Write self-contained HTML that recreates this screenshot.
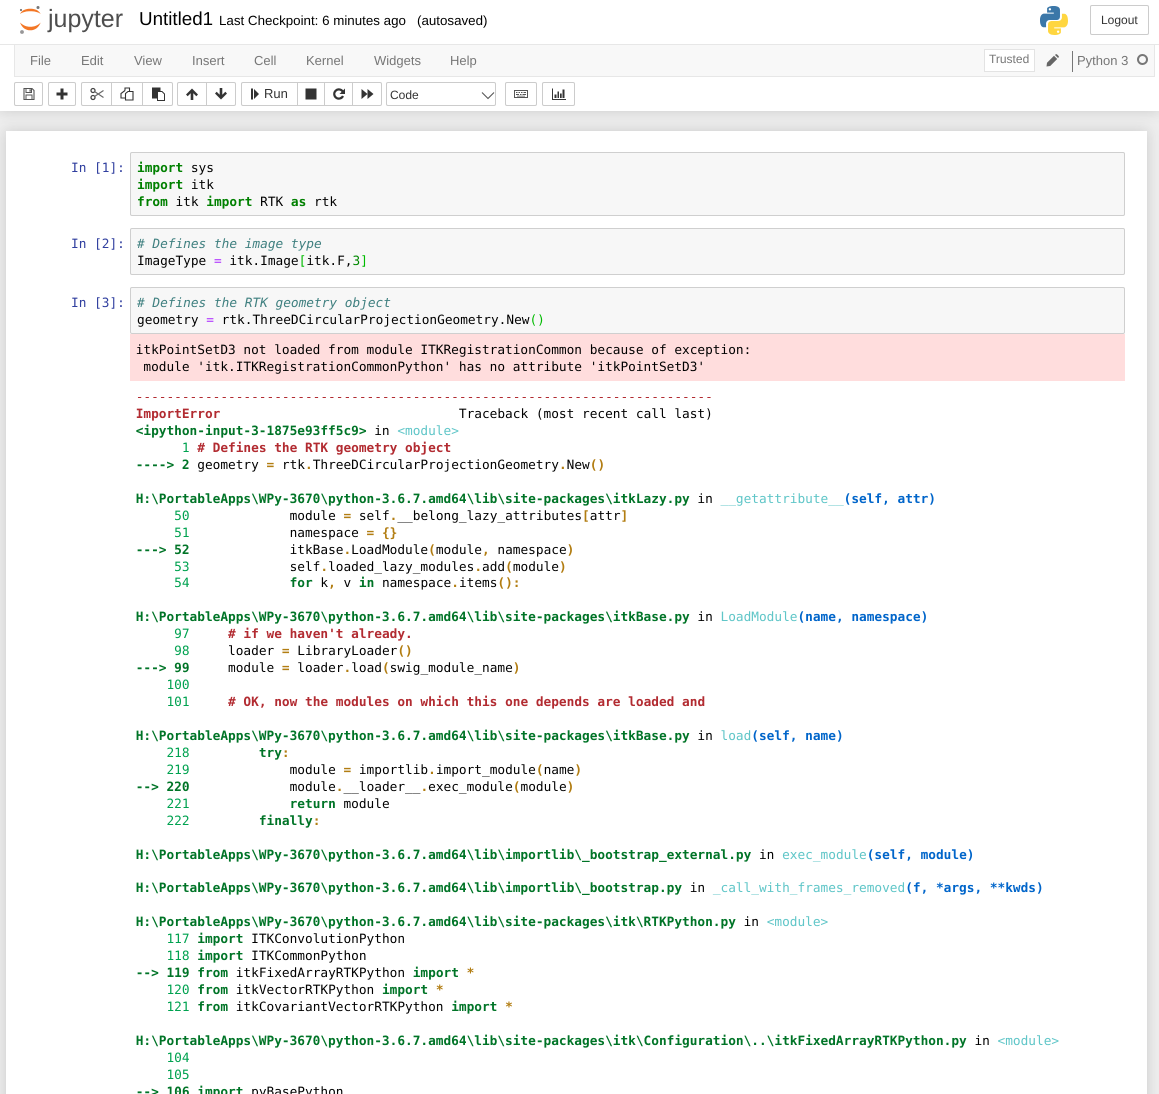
<!DOCTYPE html>
<html><head><meta charset="utf-8"><title>Untitled1</title>
<style>
html,body{margin:0;padding:0;width:1159px;height:1094px;overflow:hidden;background:#eee}
body{position:relative;font-family:"Liberation Sans",Arial,sans-serif;color:#333;text-rendering:geometricPrecision}
.a{position:absolute}
#hdr{left:0;top:0;width:1159px;height:111px;background:#fff;box-shadow:0 0 12px 1px rgba(87,87,87,.2)}
#nb{left:6px;top:131px;width:1141px;height:980px;background:#fff;box-shadow:0 0 12px 1px rgba(87,87,87,.2)}
.t{position:absolute;white-space:pre;line-height:17px}
.m{font-size:13px;color:#777;top:52px}
.b{position:absolute;top:82px;height:24px;box-sizing:border-box;background:#fff;border:1px solid #ccc;border-radius:2px}
.b svg{position:absolute;left:50%;top:50%;margin:-7px 0 0 -7px;width:14px;height:14px;fill:#333}
pre,.p{font-family:"DejaVu Sans Mono","Liberation Mono",monospace;font-size:12.79px;line-height:17px;margin:0;position:absolute;white-space:pre;color:#000}
.p{color:#303f9f;left:71px}
.box{position:absolute;left:130px;width:995px;box-sizing:border-box;background:#f7f7f7;border:1px solid #cfcfcf;border-radius:2px}
.k{color:#008000;font-weight:bold}.c{color:#408080;font-style:italic}.o{color:#a2f}.mb{color:#0b0}.n{color:#080}
.g{color:#007427;font-weight:bold}.G{color:#00a250}.r{color:#b22b31}.R{color:#b22b31;font-weight:bold}
.y{color:#b27d12;font-weight:bold}.C{color:#60c6c8}.B{color:#0065ca;font-weight:bold}
</style></head><body>
<div id="hdr" class="a"></div>
<div id="nb" class="a"></div>

<svg class="a" style="left:18px;top:5px" width="25" height="30" viewBox="0 0 25 30">
<path d="M2 9C4 5 8 3.800 12.300 3.800S20.500 5 22.700 9C20 6.800 16 6.200 12.300 6.200S5 6.800 2 9z" fill="#f37726"/>
<path d="M2 17.500C4 23 8 25.300 12.300 25.300S20.500 23 22.700 17.500C20 20.500 16 21.800 12.300 21.800S5 20.500 2 17.500z" fill="#f37726"/>
<circle cx="20" cy="2.500" r="1.500" fill="#767677"/><circle cx="3" cy="5" r="1.100" fill="#767677"/><circle cx="4" cy="27" r="1.900" fill="#989798"/>
</svg>
<div class="t" style="left:48px;top:9px;font-size:25px;line-height:20px;color:#4e4e4e">jupyter</div>
<div class="t" style="left:139px;top:10px;font-size:18.8px;color:#000;line-height:18px">Untitled1</div>
<div class="t" style="left:219px;top:12px;font-size:13.35px;color:#000">Last Checkpoint: 6 minutes ago</div>
<div class="t" style="left:417px;top:12px;font-size:13.35px;color:#000">(autosaved)</div>

<svg class="a" style="left:1040px;top:5.500px" width="28" height="29" viewBox="0 0 30 31">
<path d="M14.600 0C7.200 0 7.600 3.200 7.600 3.200V7h7.200v1.100H4.700S0 7.600 0 15.300s4.100 7.400 4.100 7.400h2.400v-3.600s-.1-4.100 4-4.100h7s3.900.1 3.900-3.700V4.300S22 0 14.600 0zM10.600 2.200a1.300 1.300 0 1 1 0 2.600 1.300 1.300 0 0 1 0-2.600z" fill="#3b77a8"/>
<path d="M15.400 31c7.400 0 7-3.200 7-3.200V24h-7.200v-1.100h10.100s4.700.5 4.700-7.200-4.100-7.400-4.100-7.400h-2.400v3.600s.1 4.100-4 4.100h-7s-3.900-.1-3.900 3.700v6.500S8 31 15.400 31zm4-2.200a1.300 1.300 0 1 1 0-2.600 1.300 1.300 0 0 1 0 2.600z" fill="#ffd640"/>
</svg>
<div class="a" style="left:1090px;top:5px;width:59px;height:30px;box-sizing:border-box;border:1px solid #ccc;border-radius:2px;background:#fff"></div>
<div class="t" style="left:1101px;top:12px;font-size:12px;color:#333">Logout</div>

<div class="a" style="left:0;top:44px;width:1159px;height:1px;background:#e7e7e7"></div>
<div class="a" style="left:14px;top:44px;width:1141px;height:33px;box-sizing:border-box;background:#f8f8f8;border:1px solid #e7e7e7;border-top-color:#e7e7e7"></div>
<div class="t m" style="left:30px">File</div>
<div class="t m" style="left:81px">Edit</div>
<div class="t m" style="left:134px">View</div>
<div class="t m" style="left:192px">Insert</div>
<div class="t m" style="left:254px">Cell</div>
<div class="t m" style="left:306px">Kernel</div>
<div class="t m" style="left:374px">Widgets</div>
<div class="t m" style="left:450px">Help</div>

<div class="a" style="left:984px;top:49px;width:51px;height:23px;box-sizing:border-box;border:1px solid #e3e3e3;background:#fff"></div>
<div class="t" style="left:989px;top:51px;font-size:12px;color:#777">Trusted</div>
<svg class="a" style="left:1046px;top:54px" width="13" height="13" viewBox="0 0 13 13"><path d="M0.500 12.500l.5-3.700 7-7 3.200 3.200-7 7zM9 1l.6-.6c.4-.4 1-.4 1.400 0l1.600 1.600c.4.4.4 1 0 1.400l-.6.6z" fill="#666"/></svg>
<div class="a" style="left:1072px;top:51px;width:1px;height:21px;background:#777"></div>
<div class="t m" style="left:1077px">Python 3</div>
<div class="a" style="left:1137px;top:54px;width:11px;height:11px;box-sizing:border-box;border:2px solid #777;border-radius:50%"></div>

<div class="b" style="left:14px;width:29px"><svg viewBox="0 0 14 14"><path d="M2 1.500h8l2 2V12.500H2z" fill="none" stroke="#555" stroke-width="1.100"/><path d="M4 1.500h5.500v4H4zM4 8h6v4.500H4z" fill="none" stroke="#555" stroke-width="1"/><path d="M7.500 2.300h1.300v2.400H7.500z" fill="#555"/></svg></div>
<div class="b" style="left:48px;width:28px"><svg viewBox="0 0 14 14"><path d="M5.500 1.500h3v4h4v3h-4v4h-3v-4h-4v-3h4z"/></svg></div>
<div class="b" style="left:81px;width:31px;border-radius:2px 0 0 2px"><svg viewBox="0 0 14 14"><circle cx="3" cy="3.500" r="2" fill="none" stroke="#444" stroke-width="1.300"/><circle cx="3" cy="10.500" r="2" fill="none" stroke="#444" stroke-width="1.300"/><path d="M4.500 4.500L13.500 10.500M4.500 9.500L13.500 3.500" stroke="#666" stroke-width="1.100" fill="none"/></svg></div>
<div class="b" style="left:111px;width:32px;border-radius:0"><svg viewBox="0 0 14 14"><path d="M5 3.500V1h4.500v3.500" fill="none" stroke="#333" stroke-width="1.100"/><path d="M5 3.500L1 6.500v4.500h4.500" fill="none" stroke="#333" stroke-width="1.100"/><path d="M5.500 6.500L8 4.500h5V13H5.500z" fill="#fff" stroke="#333" stroke-width="1.100"/></svg></div>
<div class="b" style="left:142px;width:31px;border-radius:0 2px 2px 0"><svg viewBox="0 0 14 14"><path d="M1 0.500h8.500v3.500H6v7.500H1z"/><path d="M6.500 4.500h4.500l2.500 2.500v6.500h-7z" fill="#fff" stroke="#333" stroke-width="1"/></svg></div>
<div class="b" style="left:177px;width:30px;border-radius:2px 0 0 2px"><svg viewBox="0 0 14 14"><path d="M7 1.500l6 6-1.700 1.700L8.300 6.200V13H5.700V6.200L2.700 9.200 1 7.500z"/></svg></div>
<div class="b" style="left:206px;width:30px;border-radius:0 2px 2px 0"><svg viewBox="0 0 14 14"><path d="M7 12.500l-6-6 1.700-1.700 3 3V1h2.600v6.800l3-3L13 6.500z"/></svg></div>
<div class="b" style="left:241px;width:57px;border-radius:2px 0 0 2px"><svg style="left:8px;margin-left:0;width:10px" viewBox="0 0 10 14"><path d="M1 1.500h2v11H1zM4 2l5 5-5 5z"/></svg></div>
<div class="t" style="left:264px;top:85px;font-size:13px;color:#333">Run</div>
<div class="b" style="left:297px;width:28px;border-radius:0"><svg viewBox="0 0 14 14"><path d="M1.500 1.500h11v11h-11z"/></svg></div>
<div class="b" style="left:324px;width:29px;border-radius:0"><svg viewBox="0 0 14 14"><path d="M11 9a4.600 4.600 0 1 1-.3-4.500" fill="none" stroke="#333" stroke-width="2.200"/><path d="M13 1.500V7H7.500z"/></svg></div>
<div class="b" style="left:352px;width:30px;border-radius:0 2px 2px 0"><svg viewBox="0 0 14 14"><path d="M1.500 2l6 5-6 5zM7.500 2l6 5-6 5z"/></svg></div>
<div class="b" style="left:386px;width:110px"></div>
<div class="t" style="left:390px;top:87px;font-size:12px;color:#333">Code</div>
<svg class="a" style="left:481px;top:91px" width="14" height="9" viewBox="0 0 14 9"><path d="M1 1.500L7 7.500 13 1.500" fill="none" stroke="#555" stroke-width="1.100"/></svg>
<div class="b" style="left:505px;width:32px"><svg viewBox="0 0 14 14"><path d="M0 3h14v8H0zm1 1v6h12V4zm1 1h1.500v1H2zm2.500 0H6v1H4.500zM7 5h1.500v1H7zm2.500 0H12v1H9.500zM2 7h3v1H2zm4 0h1.500v1H6zm2.500 0H12v1H8.500zM3 8.800h8v.7H3z" fill-rule="evenodd" fill="#555"/></svg></div>
<div class="b" style="left:542px;width:33px"><svg viewBox="0 0 14 14"><path d="M0 1.500h1V12h13v1H0zM2.500 7.500h2V11h-2zM5.500 4.500h1.500V11H5.500zM8 6.500h1.700V11H8zM10.500 2.500h2V11h-2z"/></svg></div>

<div class="p" style="top:160px">In [1]:</div>
<div class="box" style="top:152px;height:64px"></div>
<pre style="left:137px;top:160px"><span class="k">import</span> sys
<span class="k">import</span> itk
<span class="k">from</span> itk <span class="k">import</span> RTK <span class="k">as</span> rtk</pre>

<div class="p" style="top:236px">In [2]:</div>
<div class="box" style="top:228px;height:47px"></div>
<pre style="left:137px;top:236px"><span class="c"># Defines the image type</span>
ImageType <span class="o">=</span> itk.Image<span class="mb">[</span>itk.F,<span class="n">3</span><span class="mb">]</span></pre>

<div class="p" style="top:295px">In [3]:</div>
<div class="box" style="top:287px;height:47px"></div>
<pre style="left:137px;top:295px"><span class="c"># Defines the RTK geometry object</span>
geometry <span class="o">=</span> rtk.ThreeDCircularProjectionGeometry.New<span class="mb">()</span></pre>

<div class="a" style="left:130px;top:334px;width:995px;height:47px;background:#fdd"></div>
<pre style="left:135.700px;top:342px">itkPointSetD3 not loaded from module ITKRegistrationCommon because of exception:
 module 'itk.ITKRegistrationCommonPython' has no attribute 'itkPointSetD3'</pre>

<pre style="left:135.700px;top:389px"><span class="r">---------------------------------------------------------------------------</span>
<span class="R">ImportError</span>                               Traceback (most recent call last)
<span class="g">&lt;ipython-input-3-1875e93ff5c9&gt;</span> in <span class="C">&lt;module&gt;</span>
<span class="G">      1</span> <span class="R"># Defines the RTK geometry object</span>
<span class="g">----&gt; 2</span> geometry <span class="y">=</span> rtk<span class="y">.</span>ThreeDCircularProjectionGeometry<span class="y">.</span>New<span class="y">()</span>

<span class="g">H:\PortableApps\WPy-3670\python-3.6.7.amd64\lib\site-packages\itkLazy.py</span> in <span class="C">__getattribute__</span><span class="B">(self, attr)</span>
<span class="G">     50</span>             module <span class="y">=</span> self<span class="y">.</span>__belong_lazy_attributes<span class="y">[</span>attr<span class="y">]</span>
<span class="G">     51</span>             namespace <span class="y">=</span> <span class="y">{}</span>
<span class="g">---&gt; 52</span>             itkBase<span class="y">.</span>LoadModule<span class="y">(</span>module<span class="y">,</span> namespace<span class="y">)</span>
<span class="G">     53</span>             self<span class="y">.</span>loaded_lazy_modules<span class="y">.</span>add<span class="y">(</span>module<span class="y">)</span></pre>

<pre style="left:135.700px;top:575px"><span class="G">     54</span>             <span class="g">for</span> k<span class="y">,</span> v <span class="g">in</span> namespace<span class="y">.</span>items<span class="y">():</span>

<span class="g">H:\PortableApps\WPy-3670\python-3.6.7.amd64\lib\site-packages\itkBase.py</span> in <span class="C">LoadModule</span><span class="B">(name, namespace)</span>
<span class="G">     97</span>     <span class="R"># if we haven't already.</span>
<span class="G">     98</span>     loader <span class="y">=</span> LibraryLoader<span class="y">()</span>
<span class="g">---&gt; 99</span>     module <span class="y">=</span> loader<span class="y">.</span>load<span class="y">(</span>swig_module_name<span class="y">)</span>
<span class="G">    100</span> 
<span class="G">    101</span>     <span class="R"># OK, now the modules on which this one depends are loaded and</span>

<span class="g">H:\PortableApps\WPy-3670\python-3.6.7.amd64\lib\site-packages\itkBase.py</span> in <span class="C">load</span><span class="B">(self, name)</span>
<span class="G">    218</span>         <span class="g">try</span><span class="y">:</span>
<span class="G">    219</span>             module <span class="y">=</span> importlib<span class="y">.</span>import_module<span class="y">(</span>name<span class="y">)</span>
<span class="g">--&gt; 220</span>             module<span class="y">.</span>__loader__<span class="y">.</span>exec_module<span class="y">(</span>module<span class="y">)</span>
<span class="G">    221</span>             <span class="g">return</span> module
<span class="G">    222</span>         <span class="g">finally</span><span class="y">:</span>

<span class="g">H:\PortableApps\WPy-3670\python-3.6.7.amd64\lib\importlib\_bootstrap_external.py</span> in <span class="C">exec_module</span><span class="B">(self, module)</span></pre>

<pre style="left:135.700px;top:880px"><span class="g">H:\PortableApps\WPy-3670\python-3.6.7.amd64\lib\importlib\_bootstrap.py</span> in <span class="C">_call_with_frames_removed</span><span class="B">(f, *args, **kwds)</span>

<span class="g">H:\PortableApps\WPy-3670\python-3.6.7.amd64\lib\site-packages\itk\RTKPython.py</span> in <span class="C">&lt;module&gt;</span>
<span class="G">    117</span> <span class="g">import</span> ITKConvolutionPython
<span class="G">    118</span> <span class="g">import</span> ITKCommonPython
<span class="g">--&gt; 119</span> <span class="g">from</span> itkFixedArrayRTKPython <span class="g">import</span> <span class="y">*</span>
<span class="G">    120</span> <span class="g">from</span> itkVectorRTKPython <span class="g">import</span> <span class="y">*</span>
<span class="G">    121</span> <span class="g">from</span> itkCovariantVectorRTKPython <span class="g">import</span> <span class="y">*</span>

<span class="g">H:\PortableApps\WPy-3670\python-3.6.7.amd64\lib\site-packages\itk\Configuration\..\itkFixedArrayRTKPython.py</span> in <span class="C">&lt;module&gt;</span>
<span class="G">    104</span> 
<span class="G">    105</span> 
<span class="g">--&gt; 106</span> <span class="g">import</span> pyBasePython</pre>
</body></html>
